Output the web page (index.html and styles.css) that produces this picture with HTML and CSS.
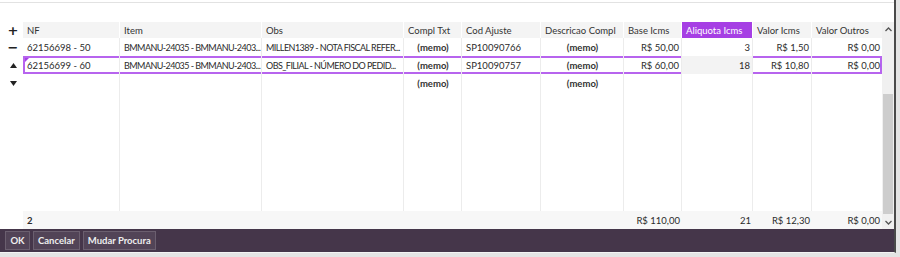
FILE: index.html
```html
<!DOCTYPE html>
<html lang="pt-BR">
<head>
    <meta charset="UTF-8">
    <title>Itens da nota</title>
    <link rel="stylesheet" href="styles.css">
</head>
<body>
    <div class="window">
        <div class="top"></div>
        <div class="main">
            <div class="side">
                <div class="side-btn plus">+</div>
                <div class="side-btn minus">&minus;</div>
                <div class="side-btn">
                    <svg width="7" height="5" viewBox="0 0 7 5"><polygon points="0,5 3.5,0 7,5" fill="#222"/></svg>
                </div>
                <div class="side-btn">
                    <svg width="7" height="5" viewBox="0 0 7 5"><polygon points="0,0 7,0 3.5,5" fill="#222"/></svg>
                </div>
            </div>
            <div class="grid">
                <div class="row head">
                    <div class="cell">NF</div>
                    <div class="cell">Item</div>
                    <div class="cell">Obs</div>
                    <div class="cell">Compl Txt</div>
                    <div class="cell">Cod Ajuste</div>
                    <div class="cell">Descricao Compl</div>
                    <div class="cell">Base Icms</div>
                    <div class="cell active">Aliquota Icms</div>
                    <div class="cell">Valor Icms</div>
                    <div class="cell">Valor Outros</div>
                </div>
                <div class="row">
                    <div class="cell">62156698 - 50</div>
                    <div class="cell long">BMMANU-24035 - BMMANU-2403...</div>
                    <div class="cell long">MILLEN1389 - NOTA FISCAL REFER...</div>
                    <div class="cell memo">(memo)</div>
                    <div class="cell">SP10090766</div>
                    <div class="cell memo">(memo)</div>
                    <div class="cell num">R$ 50,00</div>
                    <div class="cell num">3</div>
                    <div class="cell num">R$ 1,50</div>
                    <div class="cell num">R$ 0,00</div>
                </div>
                <div class="row selected">
                    <div class="cell">62156699 - 60</div>
                    <div class="cell long">BMMANU-24035 - BMMANU-2403...</div>
                    <div class="cell long">OBS_FILIAL - NÚMERO DO PEDID...</div>
                    <div class="cell memo">(memo)</div>
                    <div class="cell">SP10090757</div>
                    <div class="cell memo">(memo)</div>
                    <div class="cell num">R$ 60,00</div>
                    <div class="cell num current">18</div>
                    <div class="cell num">R$ 10,80</div>
                    <div class="cell num">R$ 0,00</div>
                </div>
                <div class="row">
                    <div class="cell"></div>
                    <div class="cell"></div>
                    <div class="cell"></div>
                    <div class="cell memo">(memo)</div>
                    <div class="cell"></div>
                    <div class="cell memo">(memo)</div>
                    <div class="cell"></div>
                    <div class="cell"></div>
                    <div class="cell"></div>
                    <div class="cell"></div>
                </div>
                <div class="row filler">
                    <div class="cell"></div>
                    <div class="cell"></div>
                    <div class="cell"></div>
                    <div class="cell"></div>
                    <div class="cell"></div>
                    <div class="cell"></div>
                    <div class="cell"></div>
                    <div class="cell"></div>
                    <div class="cell"></div>
                    <div class="cell"></div>
                </div>
                <div class="row foot">
                    <div class="cell">2</div>
                    <div class="cell"></div>
                    <div class="cell"></div>
                    <div class="cell"></div>
                    <div class="cell"></div>
                    <div class="cell"></div>
                    <div class="cell num">R$ 110,00</div>
                    <div class="cell num">21</div>
                    <div class="cell num">R$ 12,30</div>
                    <div class="cell num">R$ 0,00</div>
                </div>
            </div>
            <div class="scroll">
                <div class="arrow">
                    <svg width="7" height="5" viewBox="0 0 7 5"><polyline points="0.5,4 3.5,1 6.5,4" fill="none" stroke="#555" stroke-width="1.3"/></svg>
                </div>
                <div class="track">
                    <div class="thumb"></div>
                </div>
                <div class="arrow">
                    <svg width="7" height="5" viewBox="0 0 7 5"><polyline points="0.5,1 3.5,4 6.5,1" fill="none" stroke="#555" stroke-width="1.3"/></svg>
                </div>
            </div>
        </div>
        <div class="bar">
            <button class="btn ok">OK</button>
            <button class="btn">Cancelar</button>
            <button class="btn">Mudar Procura</button>
        </div>
    </div>
</body>
</html>
```

FILE: styles.css
```css
body {
    margin: 0;
    background-color: #e4e4e4;
    font-family: 'Lato', 'Noto Sans', sans-serif;
    font-size: 9.5px;
    color: #2b2b2b;
}
.window {
    width: 894px;
    height: 252px;
    background-color: #ffffff;
    border-right: 2px solid #4a4a4a;
    border-bottom: 1px solid #f4f4f4;
    display: flex;
    flex-direction: column;
}
.top {
    height: 19px;
    margin-top: 2px;
    border-top: 1px solid #e2e2e2;
    flex-shrink: 0;
}
.main {
    flex: 1;
    display: flex;
    min-height: 0;
}
.side {
    width: 23px;
    display: flex;
    flex-direction: column;
}
.side-btn {
    height: 18px;
    display: flex;
    align-items: center;
    justify-content: center;
    font-family: 'DejaVu Sans', sans-serif;
    font-size: 13px;
    line-height: 1;
    color: #222;
    padding-left: 3px;
}
.side-btn.plus {
    height: 16px;
    font-weight: bold;
}
.side-btn.minus {
    font-weight: bold;
}
.grid {
    width: 859px;
    display: flex;
    flex-direction: column;
}
.row {
    display: grid;
    grid-template-columns: 97px 142px 142px 58px 79px 83px 58px 71px 59px 70px;
    height: 18px;
    flex-shrink: 0;
    position: relative;
}
.cell {
    border-right: 1px solid #ececec;
    padding: 0 3px 0 4px;
    display: flex;
    align-items: center;
    white-space: nowrap;
    overflow: hidden;
}
.cell:last-child {
    border-right: none;
}
.cell.long {
    font-size: 9px;
    letter-spacing: -0.55px;
    padding-right: 0;
}
.head {
    height: 16px;
    background-color: #f4f4f4;
}
.head .cell {
    border-right-color: #ffffff;
    color: #333;
}
.head .cell.active {
    background-color: #a63fe4;
    color: #ffffff;
}
.memo {
    justify-content: center;
    font-weight: bold;
    color: #333;
}
.num {
    justify-content: flex-end;
    padding-right: 2px;
}
.current {
    background-color: #f3f3f3;
}
.selected {
    box-shadow: inset 0 0 0 2px #b764ee;
}
.selected::before {
    content: '';
    position: absolute;
    left: 2px;
    top: 2px;
    border-top: 4px solid #a63fe4;
    border-right: 4px solid transparent;
}
.filler {
    flex: 1;
}
.foot {
    background-color: #f7f7f7;
}
.foot .cell {
    border-right: none;
}
.foot .cell:first-child {
    font-weight: bold;
}
.scroll {
    width: 12px;
    background-color: #f0f0f0;
    display: flex;
    flex-direction: column;
}
.arrow {
    height: 14px;
    display: flex;
    align-items: center;
    justify-content: center;
}
.track {
    flex: 1;
    padding-top: 58px;
    display: flex;
    justify-content: center;
}
.thumb {
    width: 10px;
    height: 120px;
    background-color: #cdcdcd;
}
.bar {
    height: 23px;
    background-color: #45364a;
    display: flex;
    align-items: center;
    gap: 3px;
    padding-left: 5px;
    flex-shrink: 0;
}
.btn {
    height: 19px;
    background-color: #524457;
    border: 1px solid #6b5f6f;
    color: #eeeeee;
    font-family: 'Lato', sans-serif;
    font-size: 9.5px;
    font-weight: bold;
    padding: 0 4px;
    cursor: pointer;
}
.btn.ok {
    min-width: 25px;
}
```
